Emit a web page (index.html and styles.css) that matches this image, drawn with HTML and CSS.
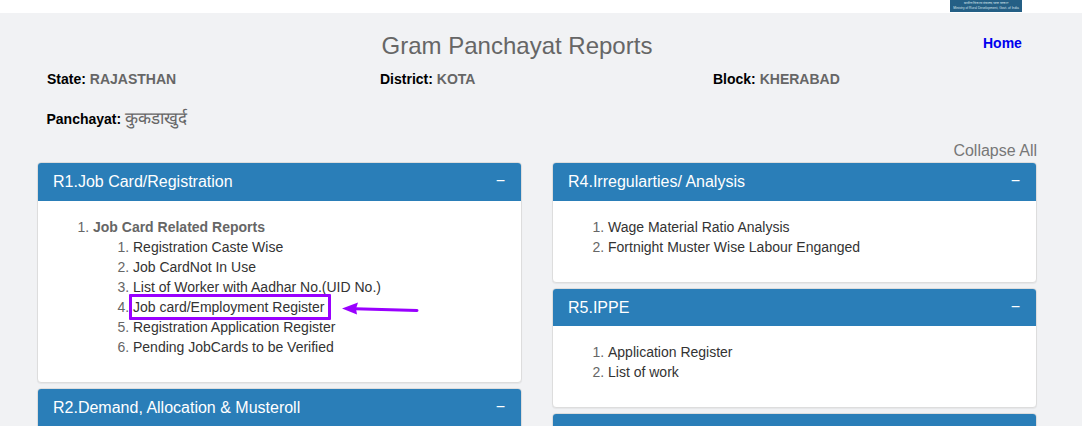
FILE: index.html
```html
<!DOCTYPE html>
<html lang="en">
<head>
<meta charset="utf-8">
<title>Gram Panchayat Reports</title>
<link rel="stylesheet" href="styles.css">
</head>
<body>
<header class="topbar">
  <div class="logo"><span class="logo-line">ग्रामीण विकास मंत्रालय, भारत सरकार</span><span class="logo-line">Ministry of Rural Development, Govt. of India</span></div>
</header>
<main class="page">
  <div class="title-row">
    <h1 class="title">Gram Panchayat Reports</h1>
    <a class="home" href="#">Home</a>
  </div>
  <div class="meta">
    <div class="meta-item"><b>State:</b> <span class="val">RAJASTHAN</span></div>
    <div class="meta-item"><b>District:</b> <span class="val">KOTA</span></div>
    <div class="meta-item"><b>Block:</b> <span class="val">KHERABAD</span></div>
  </div>
  <div class="panchayat"><b>Panchayat:</b> <span class="hindi">कुकडाखुर्द</span></div>
  <div class="collapse-row"><a class="collapse" href="#">Collapse All</a></div>
  <div class="columns">
    <div class="col">
      <section class="panel">
        <div class="panel-head"><span>R1.Job Card/Registration</span><span class="minus">−</span></div>
        <div class="panel-body r1">
          <ol class="outer">
            <li><b>Job Card Related Reports</b>
              <ol class="inner">
                <li><a href="#">Registration Caste Wise</a></li>
                <li><a href="#">Job CardNot In Use</a></li>
                <li><a href="#">List of Worker with Aadhar No.(UID No.)</a></li>
                <li><a class="marked" href="#">Job card/Employment Register<span class="mark-box"></span><svg class="mark-arrow" width="80" height="14" viewBox="0 0 80 14"><path d="M76 8.5 L14 6.8" stroke="#9900ff" stroke-width="3" stroke-linecap="round" fill="none"/><path d="M1 6.5 L17 0.5 L15 6.8 L16 12.5 Z" fill="#9900ff"/></svg></a></li>
                <li><a href="#">Registration Application Register</a></li>
                <li><a href="#">Pending JobCards to be Verified</a></li>
              </ol>
            </li>
          </ol>
        </div>
      </section>
      <section class="panel">
        <div class="panel-head"><span>R2.Demand, Allocation &amp; Musteroll</span><span class="minus">−</span></div>
        <div class="panel-body"></div>
      </section>
    </div>
    <div class="col">
      <section class="panel">
        <div class="panel-head"><span>R4.Irregularties/ Analysis</span><span class="minus">−</span></div>
        <div class="panel-body">
          <ol class="outer plain">
            <li><a href="#">Wage Material Ratio Analysis</a></li>
            <li><a href="#">Fortnight Muster Wise Labour Enganged</a></li>
          </ol>
        </div>
      </section>
      <section class="panel">
        <div class="panel-head short"><span>R5.IPPE</span><span class="minus">−</span></div>
        <div class="panel-body">
          <ol class="outer plain">
            <li><a href="#">Application Register</a></li>
            <li><a href="#">List of work</a></li>
          </ol>
        </div>
      </section>
      <section class="panel">
        <div class="panel-head"><span></span></div>
        <div class="panel-body"></div>
      </section>
    </div>
  </div>
</main>
</body>
</html>
```
FILE: styles.css
```css
html, body {
  margin: 0;
  padding: 0;
  height: 426px;
  overflow: hidden;
}
body {
  background: #f1f2f4;
  font-family: "Liberation Sans", Arial, sans-serif;
  font-size: 14px;
  line-height: 20px;
  color: #666;
}
a {
  color: #333;
  text-decoration: none;
}
.topbar {
  height: 13px;
  background: #fff;
  display: flex;
  justify-content: flex-end;
  padding-right: 60px;
}
.logo {
  width: 72px;
  height: 12px;
  padding-top: 1px;
  box-sizing: border-box;
  background: #245f85;
  display: flex;
  flex-direction: column;
  align-items: center;
  overflow: hidden;
}
.logo-line {
  font-size: 3.3px;
  line-height: 5px;
  color: #d5e2ea;
  white-space: nowrap;
}
.page {
  padding: 0 45px 0 37px;
}
.title-row {
  display: grid;
  grid-template-columns: 1fr 54px;
  align-items: start;
  height: 50px;
}
.title {
  margin: 18px 0 0;
  padding-left: 14px;
  font-size: 24px;
  line-height: 30px;
  font-weight: 400;
  color: #666;
  text-align: center;
}
.home {
  margin-top: 20px;
  color: #0000ee;
  font-weight: 700;
  font-size: 14px;
}
.meta {
  display: grid;
  grid-template-columns: repeat(3, 333px);
  padding: 6px 0 0 10px;
  height: 40px;
  box-sizing: content-box;
}
.meta-item b, .panchayat b {
  color: #000;
}
.meta-item .val {
  font-weight: 700;
  color: #666;
}
.meta-item {
  height: 20px;
}
.panchayat {
  padding-left: 9.5px;
  height: 24px;
}
.hindi {
  font-size: 17px;
}
.collapse-row {
  text-align: right;
  margin-top: 8px;
  height: 21px;
  font-size: 16px;
  line-height: 20px;
}
.collapse {
  color: #777;
}
.columns {
  display: grid;
  grid-template-columns: 485px 485px;
  column-gap: 30px;
}
.col {
  display: flex;
  flex-direction: column;
  gap: 5px;
}
.panel {
  background: #fff;
  border: 1px solid #ddd;
  border-radius: 4px;
  box-shadow: 0 1px 1px rgba(0, 0, 0, .05);
  overflow: hidden;
}
.panel-head {
  background: #2a7eb8;
  color: #fff;
  font-size: 16px;
  line-height: 18px;
  height: 38px;
  box-sizing: border-box;
  padding: 10px 15px;
  display: flex;
  justify-content: space-between;
}
.panel-head.short {
  height: 37px;
}
.minus {
  font-size: 16px;
  padding-right: 1px;
  position: relative;
  top: -1px;
}
.panel-body {
  padding: 16px 15px 15px;
  min-height: 50px;
}
.panel-body.r1 {
  min-height: 150px;
  padding-bottom: 15px;
}
.outer {
  margin: 0 0 10px;
  padding-left: 40px;
}
.inner {
  margin: 0;
  padding-left: 40px;
}
.marked {
  position: relative;
  display: inline-block;
}
.mark-box {
  position: absolute;
  left: -4px;
  top: -3px;
  width: 202px;
  height: 26px;
  box-sizing: border-box;
  border: 3px solid #9900ff;
  border-radius: 1px;
}
.mark-arrow {
  position: absolute;
  left: 208px;
  top: 5px;
}
```
